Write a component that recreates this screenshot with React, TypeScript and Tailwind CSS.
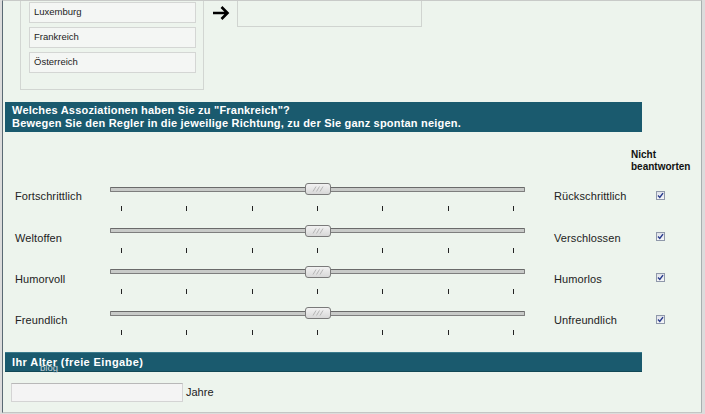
import React from "react";

const rows = [
  ["Fortschrittlich", "Rückschrittlich"],
  ["Weltoffen", "Verschlossen"],
  ["Humorvoll", "Humorlos"],
  ["Freundlich", "Unfreundlich"],
];

function Thumb() {
  return (
    <div className="absolute left-[195px] top-[4px] w-[26px] h-[12px] rounded-[3px] border border-[#7a7a7a] bg-gradient-to-b from-[#f2f2f2] to-[#d8d8d8] flex items-center justify-center">
      <svg width="12" height="6" viewBox="0 0 12 6">
        <path d="M1 5.5 L4 0.5 M4.5 5.5 L7.5 0.5 M8 5.5 L11 0.5" stroke="#a8a8a8" strokeWidth="0.8" fill="none" />
      </svg>
    </div>
  );
}

function Check() {
  return (
    <div className="w-[9px] h-[9px] border border-[#8f98aa] bg-gradient-to-b from-[#dfe2ea] to-[#f6f6f8] flex items-center justify-center">
      <svg width="7" height="7" viewBox="0 0 7 7">
        <path d="M1 3.6 L2.8 5.4 L6 1.2" stroke="#273a8c" strokeWidth="1.4" fill="none" />
      </svg>
    </div>
  );
}

function SliderRow({ left, right }: { left: string; right: string }) {
  return (
    <div className="flex h-[41.3px]">
      <div className="w-[107px] shrink-0 pl-[12px] pt-[11px] text-[11px] leading-[13px] tracking-[0.1px] text-[#222]">{left}</div>
      <div className="relative w-[415px] shrink-0">
        <div className="mt-[7.5px] h-[5px] rounded-[1px] border border-[#7e7e7e] border-t-[#6a6a6a] bg-[#c8cac8]" />
        <Thumb />
        <div className="mt-[14.5px] flex justify-between px-[11px]">
          {[0, 1, 2, 3, 4, 5, 6].map((i) => (
            <div key={i} className="w-px h-[5px] bg-[#222]" />
          ))}
        </div>
      </div>
      <div className="ml-[29px] w-[102px] shrink-0 pt-[11px] text-[11px] leading-[13px] tracking-[0.1px] text-[#222]">{right}</div>
      <div className="pt-[11.5px]">
        <Check />
      </div>
    </div>
  );
}

export default function App() {
  return (
    <div className="w-[705px] h-[414px] bg-[#dcdcdc] overflow-hidden" style={{ fontFamily: '"Liberation Sans", Arial, sans-serif' }}>
      <div className="relative ml-[2px] w-[700px] h-[413px] bg-[#edf4ed] border-l border-[#5a6a74] border-r border-r-[#a8b0b0] border-t border-t-[#c8cac8] border-b border-b-[#c4c6c4]">
        {/* top section */}
        <div className="flex items-start h-[89px]">
          <div className="ml-[17px] w-[184px] h-[89px] border-l border-r border-b border-[#d2d6d2] pt-[1px] pl-[8px] flex flex-col gap-[4px]">
            {["Luxemburg", "Frankreich", "Österreich"].map((c) => (
              <div key={c} className="w-[167px] h-[21px] border border-[#d4d6d4] bg-[#f4f6f4] pl-[4px] flex items-center text-[9.5px] text-[#222]">
                {c}
              </div>
            ))}
          </div>
          <div className="ml-[8px] mt-[4px]">
            <svg width="18" height="16" viewBox="0 0 18 16">
              <path d="M1 8 H15 M9.5 2 L15.5 8 L9.5 14" stroke="#000" strokeWidth="2.6" fill="none" strokeLinejoin="miter" />
            </svg>
          </div>
          <div className="ml-[7px] w-[185px] h-[26px] border-l border-r border-b border-[#d0d4d0]" />
        </div>

        {/* header */}
        <div className="ml-[2px] mt-[12px] w-[637px] h-[30px] bg-[#1a5a6e] pl-[7px] pt-[2px] text-white font-bold text-[11px] leading-[13px] tracking-[0.2px]">
          <div>Welches Assoziationen haben Sie zu "Frankreich"?</div>
          <div>Bewegen Sie den Regler in die jeweilige Richtung, zu der Sie ganz spontan neigen.</div>
        </div>

        <div className="ml-[628px] mt-[17px] h-[24px] text-[10px] leading-[12px] font-bold text-[#111]">
          <div>Nicht</div>
          <div>beantworten</div>
        </div>

        <div className="mt-[6.3px]">
          {rows.map(([l, r]) => (
            <SliderRow key={l} left={l} right={r} />
          ))}
        </div>

        {/* age */}
        <div className="relative ml-[2px] mt-[7.5px] w-[637px] h-[20px] bg-[#1a5a6e] border-t border-t-[#3a7a8c] border-b border-b-[#124856] pl-[7px] flex items-center text-white font-bold text-[11px] tracking-[0.4px]">
          Ihr Alter (freie Eingabe)
          <span className="absolute left-[35px] top-[10px] text-[9.5px] font-normal tracking-normal text-[#c4d0d6] leading-[10px]">blog</span>
        </div>
        <div className="mt-[11px] flex items-center">
          <div className="ml-[8px] w-[172px] h-[19px] bg-[#f4f4f4] border border-[#d4d4d4] border-t-[#b8b8b8]" />
          <span className="ml-[3px] text-[11px] text-[#222]">Jahre</span>
        </div>
      </div>
    </div>
  );
}
